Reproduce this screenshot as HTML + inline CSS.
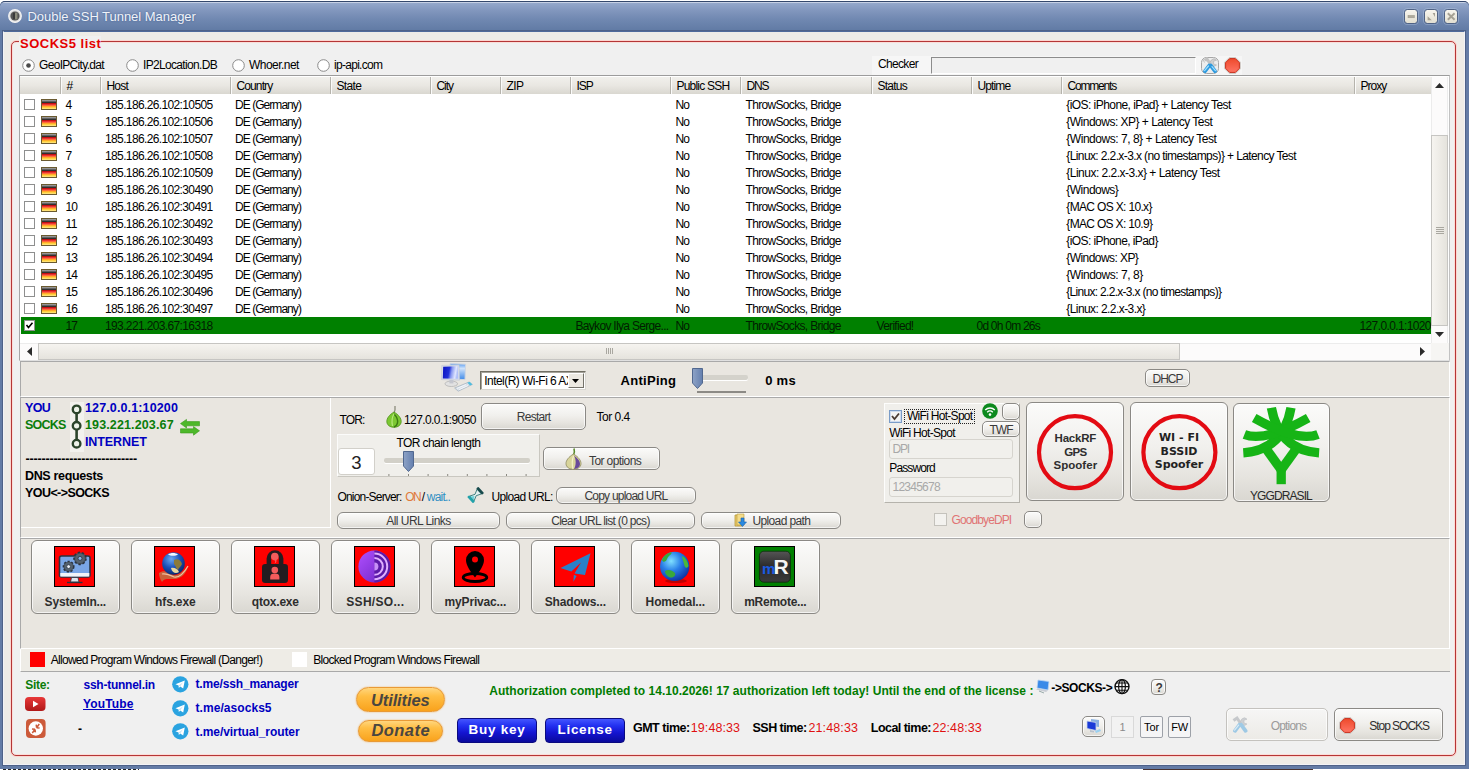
<!DOCTYPE html>
<html><head><meta charset="utf-8"><title>Double SSH Tunnel Manager</title>
<style>
html,body{margin:0;padding:0}
body{width:1470px;height:770px;overflow:hidden;background:#fff;font-family:"Liberation Sans",sans-serif;font-size:11px;color:#000;position:relative}
div,span,svg,a,b,i{position:absolute;box-sizing:border-box;white-space:nowrap}
svg{overflow:visible}
#win{left:0;top:0;width:1470px;height:770px}
#frame{left:0;top:1px;width:1469px;height:767.5px;background:#647ca6;border-radius:5px 5px 0 0}
#title{left:0;top:1px;width:1469px;height:30px;border-radius:5px 5px 0 0;border-top:1px solid #34486c;background:linear-gradient(#c6d0e4 0,#c6d0e4 1px,#93a7ca 1.5px,#8196bd 30%,#7088b1 60%,#607aa4 100%)}
#ttext{left:27.5px;top:8.5px;font-size:13px;line-height:16px;letter-spacing:-0.03px;color:#f0f3f9;text-shadow:0 0 2px #3d5a8c}
#client{left:3px;top:30.5px;width:1462px;height:734.5px;box-shadow:0 0 0 1px #4f6288;background:#eeece7;border:1px solid #f2f3f7;border-top-color:#4f6a9a}
#grp{left:11px;top:41px;width:1445px;height:715px;border:1px solid #b43636;border-radius:5px;background:#f0f0f0;box-shadow:0 0 0 1px rgba(255,205,200,0.75),inset 0 0 0 1px rgba(255,215,210,0.75)}
#legend{left:19px;top:36px;height:16px;line-height:16px;background:#f0f0f0;color:#e40000;font-weight:bold;font-size:13px;letter-spacing:0.5px;padding:0 0 0 1px}
.panel{background:#e9e6e0;border:1px solid #fff;border-top-color:#a9a9a9;border-left-color:#a9a9a9}
.t{line-height:13px;height:13px}
</style></head><body>
<div id="win">
<div id="frame"></div>
<div id="title"></div>
<span id="ttext">Double SSH Tunnel Manager</span>
<div id="client"></div>
<div id="grp"></div>
<span id="legend">SOCKS5 list</span>

<svg style="left:21.5px;top:58.8px" width="13" height="13"><circle cx="6.5" cy="6.5" r="5.8" fill="#fff" stroke="#8a8a8a" stroke-width="1"/><circle cx="6.5" cy="6.5" r="2.3" fill="#4a4a4a"/></svg>
<span style="left:39px;top:59px;font-size:12px;line-height:13px;height:13px;letter-spacing:-0.68px;">GeoIPCity.dat</span>
<svg style="left:125.5px;top:58.8px" width="13" height="13"><circle cx="6.5" cy="6.5" r="5.8" fill="#fff" stroke="#8a8a8a" stroke-width="1"/></svg>
<span style="left:143px;top:59px;font-size:12px;line-height:13px;height:13px;letter-spacing:-0.67px;">IP2Location.DB</span>
<svg style="left:231.5px;top:58.8px" width="13" height="13"><circle cx="6.5" cy="6.5" r="5.8" fill="#fff" stroke="#8a8a8a" stroke-width="1"/></svg>
<span style="left:249px;top:59px;font-size:12px;line-height:13px;height:13px;letter-spacing:-0.54px;">Whoer.net</span>
<svg style="left:316.5px;top:58.8px" width="13" height="13"><circle cx="6.5" cy="6.5" r="5.8" fill="#fff" stroke="#8a8a8a" stroke-width="1"/></svg>
<span style="left:334px;top:59px;font-size:12px;line-height:13px;height:13px;letter-spacing:-0.71px;">ip-api.com</span>
<div style="left:872px;top:56px;width:370px;height:19px;background:#f6f6f6"></div>
<span style="left:878px;top:58px;font-size:12px;line-height:13px;height:13px;letter-spacing:-0.67px;">Checker</span>
<div style="left:931px;top:57px;width:265px;height:17px;background:#f0f0f0;border:1px solid #fff;border-top-color:#8c8c8c;border-left-color:#8c8c8c"></div>
<div id="list" style="left:19px;top:75px;width:1431px;height:286px;background:#fff;border:1px solid #c2c2c2;border-top-color:#9c9c9c;border-left-color:#a6a6a6;border-bottom-color:#e0e0e0"></div>
<div id="hdr" style="left:20px;top:77px;width:1411px;height:17px;background:linear-gradient(#f1f0ec 0,#e9e7e2 50%,#d9d7d0 100%)"></div>
<div style="left:60px;top:77px;width:1px;height:17px;background:#b5b3ac"></div><div style="left:61px;top:77px;width:1px;height:17px;background:#fbfbfa"></div>
<span style="left:66.5px;top:80px;font-size:12px;line-height:13px;height:13px;letter-spacing:-0.67px;">#</span>
<div style="left:100px;top:77px;width:1px;height:17px;background:#b5b3ac"></div><div style="left:101px;top:77px;width:1px;height:17px;background:#fbfbfa"></div>
<span style="left:106.5px;top:80px;font-size:12px;line-height:13px;height:13px;letter-spacing:-0.82px;">Host</span>
<div style="left:230px;top:77px;width:1px;height:17px;background:#b5b3ac"></div><div style="left:231px;top:77px;width:1px;height:17px;background:#fbfbfa"></div>
<span style="left:236.5px;top:80px;font-size:12px;line-height:13px;height:13px;letter-spacing:-0.89px;">Country</span>
<div style="left:330px;top:77px;width:1px;height:17px;background:#b5b3ac"></div><div style="left:331px;top:77px;width:1px;height:17px;background:#fbfbfa"></div>
<span style="left:336.5px;top:80px;font-size:12px;line-height:13px;height:13px;letter-spacing:-0.66px;">State</span>
<div style="left:430px;top:77px;width:1px;height:17px;background:#b5b3ac"></div><div style="left:431px;top:77px;width:1px;height:17px;background:#fbfbfa"></div>
<span style="left:436.5px;top:80px;font-size:12px;line-height:13px;height:13px;letter-spacing:-1.09px;">City</span>
<div style="left:500px;top:77px;width:1px;height:17px;background:#b5b3ac"></div><div style="left:501px;top:77px;width:1px;height:17px;background:#fbfbfa"></div>
<span style="left:506.5px;top:80px;font-size:12px;line-height:13px;height:13px;letter-spacing:-0.56px;">ZIP</span>
<div style="left:570px;top:77px;width:1px;height:17px;background:#b5b3ac"></div><div style="left:571px;top:77px;width:1px;height:17px;background:#fbfbfa"></div>
<span style="left:576.5px;top:80px;font-size:12px;line-height:13px;height:13px;letter-spacing:-1.01px;">ISP</span>
<div style="left:670px;top:77px;width:1px;height:17px;background:#b5b3ac"></div><div style="left:671px;top:77px;width:1px;height:17px;background:#fbfbfa"></div>
<span style="left:676.5px;top:80px;font-size:12px;line-height:13px;height:13px;letter-spacing:-0.79px;">Public SSH</span>
<div style="left:740px;top:77px;width:1px;height:17px;background:#b5b3ac"></div><div style="left:741px;top:77px;width:1px;height:17px;background:#fbfbfa"></div>
<span style="left:746.5px;top:80px;font-size:12px;line-height:13px;height:13px;letter-spacing:-1.15px;">DNS</span>
<div style="left:871px;top:77px;width:1px;height:17px;background:#b5b3ac"></div><div style="left:872px;top:77px;width:1px;height:17px;background:#fbfbfa"></div>
<span style="left:877.5px;top:80px;font-size:12px;line-height:13px;height:13px;letter-spacing:-0.75px;">Status</span>
<div style="left:971px;top:77px;width:1px;height:17px;background:#b5b3ac"></div><div style="left:972px;top:77px;width:1px;height:17px;background:#fbfbfa"></div>
<span style="left:977.5px;top:80px;font-size:12px;line-height:13px;height:13px;letter-spacing:-0.87px;">Uptime</span>
<div style="left:1061px;top:77px;width:1px;height:17px;background:#b5b3ac"></div><div style="left:1062px;top:77px;width:1px;height:17px;background:#fbfbfa"></div>
<span style="left:1067.5px;top:80px;font-size:12px;line-height:13px;height:13px;letter-spacing:-1.19px;">Comments</span>
<div style="left:1354px;top:77px;width:1px;height:17px;background:#b5b3ac"></div><div style="left:1355px;top:77px;width:1px;height:17px;background:#fbfbfa"></div>
<span style="left:1360.5px;top:80px;font-size:12px;line-height:13px;height:13px;letter-spacing:-1.01px;">Proxy</span>
<svg style="left:0;top:0" width="0" height="0"><defs><linearGradient id="fg" x1="0" y1="0" x2="0" y2="1"><stop offset="0" stop-color="#c8c8c8"/><stop offset="0.14" stop-color="#808080"/><stop offset="0.32" stop-color="#262626"/><stop offset="0.4" stop-color="#c41010"/><stop offset="0.56" stop-color="#ff4a4a"/><stop offset="0.66" stop-color="#ff9a20"/><stop offset="0.8" stop-color="#ffd040"/><stop offset="1" stop-color="#fff0a0"/></linearGradient></defs></svg>
<div style="left:24px;top:99px;width:11px;height:11px;border:1px solid #8e8f8f;background:#fff"></div>
<svg style="left:41px;top:99px" width="16" height="11"><rect x="0.5" y="0.5" width="15" height="10" fill="url(#fg)" stroke="#6a5a30" stroke-width="1"/></svg>
<span style="left:65.5px;top:99px;font-size:12px;line-height:13px;height:13px;letter-spacing:-1.17px;">4</span>
<span style="left:105px;top:99px;font-size:12px;line-height:13px;height:13px;letter-spacing:-0.63px;">185.186.26.102:10505</span>
<span style="left:235px;top:99px;font-size:12px;line-height:13px;height:13px;letter-spacing:-0.95px;">DE (Germany)</span>
<span style="left:675.5px;top:99px;font-size:12px;line-height:13px;height:13px;letter-spacing:-1.02px;">No</span>
<span style="left:745.5px;top:99px;font-size:12px;line-height:13px;height:13px;letter-spacing:-0.67px;">ThrowSocks, Bridge</span>
<span style="left:1066.3px;top:99px;font-size:12px;line-height:13px;height:13px;letter-spacing:-0.56px;">{iOS: iPhone, iPad} + Latency Test</span>
<div style="left:24px;top:116px;width:11px;height:11px;border:1px solid #8e8f8f;background:#fff"></div>
<svg style="left:41px;top:116px" width="16" height="11"><rect x="0.5" y="0.5" width="15" height="10" fill="url(#fg)" stroke="#6a5a30" stroke-width="1"/></svg>
<span style="left:65.5px;top:116px;font-size:12px;line-height:13px;height:13px;letter-spacing:-1.17px;">5</span>
<span style="left:105px;top:116px;font-size:12px;line-height:13px;height:13px;letter-spacing:-0.63px;">185.186.26.102:10506</span>
<span style="left:235px;top:116px;font-size:12px;line-height:13px;height:13px;letter-spacing:-0.95px;">DE (Germany)</span>
<span style="left:675.5px;top:116px;font-size:12px;line-height:13px;height:13px;letter-spacing:-1.02px;">No</span>
<span style="left:745.5px;top:116px;font-size:12px;line-height:13px;height:13px;letter-spacing:-0.67px;">ThrowSocks, Bridge</span>
<span style="left:1066.3px;top:116px;font-size:12px;line-height:13px;height:13px;letter-spacing:-0.51px;">{Windows: XP} + Latency Test</span>
<div style="left:24px;top:133px;width:11px;height:11px;border:1px solid #8e8f8f;background:#fff"></div>
<svg style="left:41px;top:133px" width="16" height="11"><rect x="0.5" y="0.5" width="15" height="10" fill="url(#fg)" stroke="#6a5a30" stroke-width="1"/></svg>
<span style="left:65.5px;top:133px;font-size:12px;line-height:13px;height:13px;letter-spacing:-1.17px;">6</span>
<span style="left:105px;top:133px;font-size:12px;line-height:13px;height:13px;letter-spacing:-0.63px;">185.186.26.102:10507</span>
<span style="left:235px;top:133px;font-size:12px;line-height:13px;height:13px;letter-spacing:-0.95px;">DE (Germany)</span>
<span style="left:675.5px;top:133px;font-size:12px;line-height:13px;height:13px;letter-spacing:-1.02px;">No</span>
<span style="left:745.5px;top:133px;font-size:12px;line-height:13px;height:13px;letter-spacing:-0.67px;">ThrowSocks, Bridge</span>
<span style="left:1066.3px;top:133px;font-size:12px;line-height:13px;height:13px;letter-spacing:-0.47px;">{Windows: 7, 8} + Latency Test</span>
<div style="left:24px;top:150px;width:11px;height:11px;border:1px solid #8e8f8f;background:#fff"></div>
<svg style="left:41px;top:150px" width="16" height="11"><rect x="0.5" y="0.5" width="15" height="10" fill="url(#fg)" stroke="#6a5a30" stroke-width="1"/></svg>
<span style="left:65.5px;top:150px;font-size:12px;line-height:13px;height:13px;letter-spacing:-1.17px;">7</span>
<span style="left:105px;top:150px;font-size:12px;line-height:13px;height:13px;letter-spacing:-0.63px;">185.186.26.102:10508</span>
<span style="left:235px;top:150px;font-size:12px;line-height:13px;height:13px;letter-spacing:-0.95px;">DE (Germany)</span>
<span style="left:675.5px;top:150px;font-size:12px;line-height:13px;height:13px;letter-spacing:-1.02px;">No</span>
<span style="left:745.5px;top:150px;font-size:12px;line-height:13px;height:13px;letter-spacing:-0.67px;">ThrowSocks, Bridge</span>
<span style="left:1066.3px;top:150px;font-size:12px;line-height:13px;height:13px;letter-spacing:-0.61px;">{Linux: 2.2.x-3.x (no timestamps)} + Latency Test</span>
<div style="left:24px;top:167px;width:11px;height:11px;border:1px solid #8e8f8f;background:#fff"></div>
<svg style="left:41px;top:167px" width="16" height="11"><rect x="0.5" y="0.5" width="15" height="10" fill="url(#fg)" stroke="#6a5a30" stroke-width="1"/></svg>
<span style="left:65.5px;top:167px;font-size:12px;line-height:13px;height:13px;letter-spacing:-1.17px;">8</span>
<span style="left:105px;top:167px;font-size:12px;line-height:13px;height:13px;letter-spacing:-0.63px;">185.186.26.102:10509</span>
<span style="left:235px;top:167px;font-size:12px;line-height:13px;height:13px;letter-spacing:-0.95px;">DE (Germany)</span>
<span style="left:675.5px;top:167px;font-size:12px;line-height:13px;height:13px;letter-spacing:-1.02px;">No</span>
<span style="left:745.5px;top:167px;font-size:12px;line-height:13px;height:13px;letter-spacing:-0.67px;">ThrowSocks, Bridge</span>
<span style="left:1066.3px;top:167px;font-size:12px;line-height:13px;height:13px;letter-spacing:-0.51px;">{Linux: 2.2.x-3.x} + Latency Test</span>
<div style="left:24px;top:184px;width:11px;height:11px;border:1px solid #8e8f8f;background:#fff"></div>
<svg style="left:41px;top:184px" width="16" height="11"><rect x="0.5" y="0.5" width="15" height="10" fill="url(#fg)" stroke="#6a5a30" stroke-width="1"/></svg>
<span style="left:65.5px;top:184px;font-size:12px;line-height:13px;height:13px;letter-spacing:-1.17px;">9</span>
<span style="left:105px;top:184px;font-size:12px;line-height:13px;height:13px;letter-spacing:-0.63px;">185.186.26.102:30490</span>
<span style="left:235px;top:184px;font-size:12px;line-height:13px;height:13px;letter-spacing:-0.95px;">DE (Germany)</span>
<span style="left:675.5px;top:184px;font-size:12px;line-height:13px;height:13px;letter-spacing:-1.02px;">No</span>
<span style="left:745.5px;top:184px;font-size:12px;line-height:13px;height:13px;letter-spacing:-0.67px;">ThrowSocks, Bridge</span>
<span style="left:1066.3px;top:184px;font-size:12px;line-height:13px;height:13px;letter-spacing:-0.52px;">{Windows}</span>
<div style="left:24px;top:201px;width:11px;height:11px;border:1px solid #8e8f8f;background:#fff"></div>
<svg style="left:41px;top:201px" width="16" height="11"><rect x="0.5" y="0.5" width="15" height="10" fill="url(#fg)" stroke="#6a5a30" stroke-width="1"/></svg>
<span style="left:65.5px;top:201px;font-size:12px;line-height:13px;height:13px;letter-spacing:-0.92px;">10</span>
<span style="left:105px;top:201px;font-size:12px;line-height:13px;height:13px;letter-spacing:-0.63px;">185.186.26.102:30491</span>
<span style="left:235px;top:201px;font-size:12px;line-height:13px;height:13px;letter-spacing:-0.95px;">DE (Germany)</span>
<span style="left:675.5px;top:201px;font-size:12px;line-height:13px;height:13px;letter-spacing:-1.02px;">No</span>
<span style="left:745.5px;top:201px;font-size:12px;line-height:13px;height:13px;letter-spacing:-0.67px;">ThrowSocks, Bridge</span>
<span style="left:1066.3px;top:201px;font-size:12px;line-height:13px;height:13px;letter-spacing:-0.66px;">{MAC OS X: 10.x}</span>
<div style="left:24px;top:218px;width:11px;height:11px;border:1px solid #8e8f8f;background:#fff"></div>
<svg style="left:41px;top:218px" width="16" height="11"><rect x="0.5" y="0.5" width="15" height="10" fill="url(#fg)" stroke="#6a5a30" stroke-width="1"/></svg>
<span style="left:65.5px;top:218px;font-size:12px;line-height:13px;height:13px;letter-spacing:-0.48px;">11</span>
<span style="left:105px;top:218px;font-size:12px;line-height:13px;height:13px;letter-spacing:-0.63px;">185.186.26.102:30492</span>
<span style="left:235px;top:218px;font-size:12px;line-height:13px;height:13px;letter-spacing:-0.95px;">DE (Germany)</span>
<span style="left:675.5px;top:218px;font-size:12px;line-height:13px;height:13px;letter-spacing:-1.02px;">No</span>
<span style="left:745.5px;top:218px;font-size:12px;line-height:13px;height:13px;letter-spacing:-0.67px;">ThrowSocks, Bridge</span>
<span style="left:1066.3px;top:218px;font-size:12px;line-height:13px;height:13px;letter-spacing:-0.67px;">{MAC OS X: 10.9}</span>
<div style="left:24px;top:235px;width:11px;height:11px;border:1px solid #8e8f8f;background:#fff"></div>
<svg style="left:41px;top:235px" width="16" height="11"><rect x="0.5" y="0.5" width="15" height="10" fill="url(#fg)" stroke="#6a5a30" stroke-width="1"/></svg>
<span style="left:65.5px;top:235px;font-size:12px;line-height:13px;height:13px;letter-spacing:-0.92px;">12</span>
<span style="left:105px;top:235px;font-size:12px;line-height:13px;height:13px;letter-spacing:-0.63px;">185.186.26.102:30493</span>
<span style="left:235px;top:235px;font-size:12px;line-height:13px;height:13px;letter-spacing:-0.95px;">DE (Germany)</span>
<span style="left:675.5px;top:235px;font-size:12px;line-height:13px;height:13px;letter-spacing:-1.02px;">No</span>
<span style="left:745.5px;top:235px;font-size:12px;line-height:13px;height:13px;letter-spacing:-0.67px;">ThrowSocks, Bridge</span>
<span style="left:1066.3px;top:235px;font-size:12px;line-height:13px;height:13px;letter-spacing:-0.59px;">{iOS: iPhone, iPad}</span>
<div style="left:24px;top:252px;width:11px;height:11px;border:1px solid #8e8f8f;background:#fff"></div>
<svg style="left:41px;top:252px" width="16" height="11"><rect x="0.5" y="0.5" width="15" height="10" fill="url(#fg)" stroke="#6a5a30" stroke-width="1"/></svg>
<span style="left:65.5px;top:252px;font-size:12px;line-height:13px;height:13px;letter-spacing:-0.92px;">13</span>
<span style="left:105px;top:252px;font-size:12px;line-height:13px;height:13px;letter-spacing:-0.63px;">185.186.26.102:30494</span>
<span style="left:235px;top:252px;font-size:12px;line-height:13px;height:13px;letter-spacing:-0.95px;">DE (Germany)</span>
<span style="left:675.5px;top:252px;font-size:12px;line-height:13px;height:13px;letter-spacing:-1.02px;">No</span>
<span style="left:745.5px;top:252px;font-size:12px;line-height:13px;height:13px;letter-spacing:-0.67px;">ThrowSocks, Bridge</span>
<span style="left:1066.3px;top:252px;font-size:12px;line-height:13px;height:13px;letter-spacing:-0.57px;">{Windows: XP}</span>
<div style="left:24px;top:269px;width:11px;height:11px;border:1px solid #8e8f8f;background:#fff"></div>
<svg style="left:41px;top:269px" width="16" height="11"><rect x="0.5" y="0.5" width="15" height="10" fill="url(#fg)" stroke="#6a5a30" stroke-width="1"/></svg>
<span style="left:65.5px;top:269px;font-size:12px;line-height:13px;height:13px;letter-spacing:-0.92px;">14</span>
<span style="left:105px;top:269px;font-size:12px;line-height:13px;height:13px;letter-spacing:-0.63px;">185.186.26.102:30495</span>
<span style="left:235px;top:269px;font-size:12px;line-height:13px;height:13px;letter-spacing:-0.95px;">DE (Germany)</span>
<span style="left:675.5px;top:269px;font-size:12px;line-height:13px;height:13px;letter-spacing:-1.02px;">No</span>
<span style="left:745.5px;top:269px;font-size:12px;line-height:13px;height:13px;letter-spacing:-0.67px;">ThrowSocks, Bridge</span>
<span style="left:1066.3px;top:269px;font-size:12px;line-height:13px;height:13px;letter-spacing:-0.46px;">{Windows: 7, 8}</span>
<div style="left:24px;top:286px;width:11px;height:11px;border:1px solid #8e8f8f;background:#fff"></div>
<svg style="left:41px;top:286px" width="16" height="11"><rect x="0.5" y="0.5" width="15" height="10" fill="url(#fg)" stroke="#6a5a30" stroke-width="1"/></svg>
<span style="left:65.5px;top:286px;font-size:12px;line-height:13px;height:13px;letter-spacing:-0.92px;">15</span>
<span style="left:105px;top:286px;font-size:12px;line-height:13px;height:13px;letter-spacing:-0.63px;">185.186.26.102:30496</span>
<span style="left:235px;top:286px;font-size:12px;line-height:13px;height:13px;letter-spacing:-0.95px;">DE (Germany)</span>
<span style="left:675.5px;top:286px;font-size:12px;line-height:13px;height:13px;letter-spacing:-1.02px;">No</span>
<span style="left:745.5px;top:286px;font-size:12px;line-height:13px;height:13px;letter-spacing:-0.67px;">ThrowSocks, Bridge</span>
<span style="left:1066.3px;top:286px;font-size:12px;line-height:13px;height:13px;letter-spacing:-0.70px;">{Linux: 2.2.x-3.x (no timestamps)}</span>
<div style="left:24px;top:303px;width:11px;height:11px;border:1px solid #8e8f8f;background:#fff"></div>
<svg style="left:41px;top:303px" width="16" height="11"><rect x="0.5" y="0.5" width="15" height="10" fill="url(#fg)" stroke="#6a5a30" stroke-width="1"/></svg>
<span style="left:65.5px;top:303px;font-size:12px;line-height:13px;height:13px;letter-spacing:-0.92px;">16</span>
<span style="left:105px;top:303px;font-size:12px;line-height:13px;height:13px;letter-spacing:-0.63px;">185.186.26.102:30497</span>
<span style="left:235px;top:303px;font-size:12px;line-height:13px;height:13px;letter-spacing:-0.95px;">DE (Germany)</span>
<span style="left:675.5px;top:303px;font-size:12px;line-height:13px;height:13px;letter-spacing:-1.02px;">No</span>
<span style="left:745.5px;top:303px;font-size:12px;line-height:13px;height:13px;letter-spacing:-0.67px;">ThrowSocks, Bridge</span>
<span style="left:1066.3px;top:303px;font-size:12px;line-height:13px;height:13px;letter-spacing:-0.58px;">{Linux: 2.2.x-3.x}</span>
<div style="left:21px;top:317px;width:1410px;height:17px;background:#008000"></div>
<div style="left:24px;top:320px;width:11px;height:11px;border:1px solid #8e8f8f;background:#fff"></div>
<svg style="left:24px;top:320px" width="11" height="11"><path d="M2.5 5 L4.5 7.5 L8.5 2.8" fill="none" stroke="#000" stroke-width="1.6"/></svg>
<span style="left:65.5px;top:320px;font-size:12px;color:#001c00;line-height:13px;height:13px;letter-spacing:-0.92px;">17</span>
<span style="left:105px;top:320px;font-size:12px;color:#001c00;line-height:13px;height:13px;letter-spacing:-0.63px;">193.221.203.67:16318</span>
<span style="left:575.5px;top:320px;font-size:12px;color:#001c00;line-height:13px;height:13px;letter-spacing:-0.69px;">Baykov Ilya Serge...</span>
<span style="left:675.5px;top:320px;font-size:12px;color:#001c00;line-height:13px;height:13px;letter-spacing:-1.02px;">No</span>
<span style="left:745.5px;top:320px;font-size:12px;color:#001c00;line-height:13px;height:13px;letter-spacing:-0.67px;">ThrowSocks, Bridge</span>
<span style="left:876.5px;top:320px;font-size:12px;color:#001c00;line-height:13px;height:13px;letter-spacing:-0.71px;">Verified!</span>
<span style="left:976.5px;top:320px;font-size:12px;color:#001c00;line-height:13px;height:13px;letter-spacing:-0.77px;">0d 0h 0m 26s</span>
<div style="left:1355px;top:317px;width:76px;height:17px;overflow:hidden">
<span style="left:4.5px;top:3px;font-size:12px;color:#001c00;line-height:13px;height:13px;letter-spacing:-0.62px;">127.0.0.1:10200</span>
</div>
<div style="left:1431px;top:77px;width:17px;height:266px;background:#fcfbfb;border-left:1px solid #ececec;border-right:1px solid #ececec"></div>
<svg style="left:1431px;top:77px" width="17" height="17"><path d="M4 11 L8.5 6 L13 11 Z" fill="#2b2b2b"/></svg>
<div style="left:1431px;top:135px;width:17px;height:191px;background:linear-gradient(90deg,#f6f4f0,#e5e3dd);border:1px solid #c6c5c2"></div>
<svg style="left:1434.5px;top:226px" width="10" height="9"><path d="M1 1.5H9M1 3.5H9M1 5.5H9M1 7.5H9" stroke="#a9a7a0" stroke-width="1"/></svg>
<svg style="left:1431px;top:326px" width="17" height="17"><path d="M4 6 L13 6 L8.5 11 Z" fill="#2b2b2b"/></svg>
<div style="left:20px;top:343px;width:1411px;height:17px;background:#fcfbfb;border-top:1px solid #ececec"></div>
<svg style="left:21px;top:343px" width="17" height="17"><path d="M11 4 L11 13 L6 8.5 Z" fill="#2b2b2b"/></svg>
<div style="left:38px;top:343px;width:1142px;height:17px;background:linear-gradient(#f6f4f0,#e5e3dd);border:1px solid #c6c5c2"></div>
<svg style="left:605px;top:347px" width="10" height="9"><path d="M1.5 1V7M3.5 1V7M5.5 1V7M7.5 1V7" stroke="#a9a7a0" stroke-width="1"/></svg>
<svg style="left:1414px;top:343px" width="17" height="17"><path d="M6 4 L6 13 L11 8.5 Z" fill="#2b2b2b"/></svg>
<div style="left:1431px;top:343px;width:18px;height:17px;background:#f6f5f3"></div>
<div class="panel" style="left:20px;top:361px;width:1430px;height:36px"></div>
<svg style="left:441px;top:363px" width="32" height="30" viewBox="0 0 32 30"><defs><linearGradient id="mon" x1="0" y1="0" x2="1" y2="0.15"><stop offset="0" stop-color="#0a12c0"/><stop offset="0.45" stop-color="#2030d8"/><stop offset="0.62" stop-color="#8898f0"/><stop offset="0.88" stop-color="#e0e6ff"/><stop offset="1" stop-color="#b0c0f8"/></linearGradient><linearGradient id="mon2" x1="0" y1="0" x2="0" y2="1"><stop offset="0" stop-color="#5a9cf0"/><stop offset="0.3" stop-color="#cfe2fa"/><stop offset="1" stop-color="#3f8ae8"/></linearGradient></defs><path d="M9 0.6 L24.6 1.2 L24 16.6 L9 16Z" fill="url(#mon2)" stroke="#cfd6e2" stroke-width="1"/><ellipse cx="10.3" cy="20.8" rx="6.3" ry="2.7" fill="#e2e2e2" stroke="#b4b4b4" stroke-width="0.8"/><path d="M8.4 16.5 H12.4 V20.4 H8.4Z" fill="#c4c6ce"/><path d="M0.8 2.4 L18 1.9 L18.6 17.2 L0.4 16.6Z" fill="#d9dde8" stroke="#bfc6d4" stroke-width="0.6"/><path d="M2.2 3.7 L16.8 3.3 L17.3 15.8 L1.8 15.4Z" fill="url(#mon)"/><path d="M13.6 25 L28 19 L31.4 21.4 L17.2 28.2Z" fill="#d9e0e8" stroke="#a9b6c2" stroke-width="0.8"/><path d="M26.4 19.8 L28.6 18.8 L31.4 21.4 L29 22.6Z" fill="#4fbfe0"/><path d="M16 25.4 L25 21.6 M18 26.6 L27 22.6" stroke="#f6f8fa" stroke-width="0.9"/></svg>
<div style="left:480px;top:371px;width:106px;height:19px;background:#fff;border:1px solid #716f64;border-right-color:#d8d6d0;border-bottom-color:#d8d6d0;box-shadow:inset 1px 1px 0 #a5a39b"></div>
<div style="left:484px;top:374px;width:84px;height:14px;overflow:hidden">
<span style="left:0.3px;top:1px;font-size:12px;line-height:13px;height:13px;letter-spacing:-0.55px;">Intel(R) Wi-Fi 6 AX201</span>
</div>
<div style="left:568px;top:373px;width:16px;height:15px;background:#ece9e2;border:1px solid #fff;border-right-color:#74726a;border-bottom-color:#74726a"></div>
<svg style="left:568px;top:373px" width="16" height="15"><path d="M4 6 L11 6 L7.5 10 Z" fill="#000"/></svg>
<span style="left:620.5px;top:373px;font-size:13px;font-weight:bold;line-height:16px;height:16px;letter-spacing:0.30px;">AntiPing</span>
<div style="left:700px;top:375px;width:48px;height:5px;background:#d4d2cb;border-radius:2px;box-shadow:0 1px 0 #fff"></div>
<svg style="left:692px;top:368px" width="11" height="21"><defs><linearGradient id="th" x1="0" y1="0" x2="1" y2="0"><stop offset="0" stop-color="#8ea3c6"/><stop offset="1" stop-color="#647fae"/></linearGradient></defs><path d="M0.5 0.5 H10.5 V15 L5.5 20.5 L0.5 15 Z" fill="url(#th)" stroke="#51688f" stroke-width="1"/></svg>
<div style="left:697px;top:391px;width:49px;height:2px;background:#8c8a85"></div>
<span style="left:765.2px;top:373px;font-size:13px;font-weight:bold;line-height:16px;height:16px;letter-spacing:0.29px;">0 ms</span>
<div style="left:1145px;top:369px;width:45px;height:18px;border:1px solid #8b8985;background:linear-gradient(#fbfbfa 0,#f1f0ed 45%,#e6e4df 75%,#d9d7d1 100%);box-shadow:inset 0 0 0 1px rgba(255,255,255,0.7);border-radius:5px;"></div>
<span style="left:1152.5px;top:371.5px;font-size:12px;color:#3a3a3a;line-height:14px;height:14px;letter-spacing:-1.00px;">DHCP</span>
<div class="panel" style="left:20px;top:397px;width:1430px;height:141px"></div>
<div style="left:21px;top:527px;width:310px;height:1px;background:#fff"></div><div style="left:330px;top:398px;width:1px;height:130px;background:#fff"></div>
<span style="left:25px;top:401px;font-size:12.5px;font-weight:bold;color:#0000c0;line-height:15px;height:15px;letter-spacing:-0.63px;">YOU</span>
<span style="left:25px;top:418px;font-size:12.5px;font-weight:bold;color:#0a7d0a;line-height:15px;height:15px;letter-spacing:-0.77px;">SOCKS</span>
<span style="left:85px;top:401px;font-size:12.5px;font-weight:bold;color:#0000c0;line-height:15px;height:15px;letter-spacing:0.13px;">127.0.0.1:10200</span>
<span style="left:85px;top:418px;font-size:12.5px;font-weight:bold;color:#0a7d0a;line-height:15px;height:15px;letter-spacing:0.13px;">193.221.203.67</span>
<span style="left:85px;top:435px;font-size:12.5px;font-weight:bold;color:#0000c0;line-height:15px;height:15px;letter-spacing:-0.10px;">INTERNET</span>
<span style="left:25.5px;top:452px;font-size:12.5px;font-weight:bold;line-height:15px;height:15px;letter-spacing:-0.18px;">----------------------------</span>
<span style="left:25px;top:469px;font-size:12.5px;font-weight:bold;line-height:15px;height:15px;letter-spacing:-0.34px;">DNS requests</span>
<span style="left:25px;top:486px;font-size:12.5px;font-weight:bold;line-height:15px;height:15px;letter-spacing:-0.57px;">YOU&lt;-&gt;SOCKS</span>
<div style="left:70px;top:402px;width:14px;height:50px;background:#f3f2ee"></div>
<svg style="left:70px;top:402px" width="14" height="50"><path d="M6.6 9V41" stroke="#2c452c" stroke-width="2.6"/><circle cx="6.6" cy="7.4" r="3.8" fill="#eef3ea" stroke="#2c452c" stroke-width="2.4"/><circle cx="6.6" cy="23.8" r="3.8" fill="#eef3ea" stroke="#2c452c" stroke-width="2.4"/><circle cx="6.6" cy="41.7" r="3.8" fill="#eef3ea" stroke="#2c452c" stroke-width="2.4"/></svg>
<svg style="left:179.5px;top:419px" width="20" height="17"><path d="M0.5 4.6 L6.5 0.4 V2.6 H19.5 V6.8 H6.5 V9 Z" fill="#4db82a" stroke="#3a9a1c" stroke-width="0.6"/><path d="M19.5 11.8 L13.5 7.6 V9.8 H0.5 V14 H13.5 V16.2 Z" fill="#4db82a" stroke="#3a9a1c" stroke-width="0.6"/></svg>
<span style="left:339.5px;top:414px;font-size:12px;line-height:13px;height:13px;letter-spacing:-0.84px;">TOR:</span>
<svg style="left:386px;top:405px" width="16" height="23"><path d="M9 1 Q9.5 5 8 8" stroke="#8a8a7a" stroke-width="1.3" fill="none"/><path d="M8 7 C3 10 0.8 13.5 0.8 16.5 C0.8 20 4 22.3 8 22.3 C12 22.3 15.2 20 15.2 16.5 C15.2 13.5 13 10 8 7Z" fill="#7cc832" stroke="#4f8f1a" stroke-width="0.8"/><path d="M8 9 C11 12 12 15 11.5 18 C11 20.5 9.5 21.5 8 22" fill="none" stroke="#3c7a12" stroke-width="1.4"/><path d="M8 9 C6 12 5.5 16 6.5 21" fill="none" stroke="#b6e87a" stroke-width="1.2"/></svg>
<span style="left:404px;top:414px;font-size:12px;line-height:13px;height:13px;letter-spacing:-0.59px;">127.0.0.1:9050</span>
<div style="left:481px;top:403px;width:105px;height:27px;border:1px solid #8b8985;background:linear-gradient(#fbfbfa 0,#f1f0ed 45%,#e6e4df 75%,#d9d7d1 100%);box-shadow:inset 0 0 0 1px rgba(255,255,255,0.7);border-radius:5px;"></div>
<span style="left:516.8px;top:411.0px;font-size:12px;color:#3a3a3a;line-height:13px;height:13px;letter-spacing:-0.75px;">Restart</span>
<span style="left:596.5px;top:411px;font-size:12px;line-height:13px;height:13px;letter-spacing:-0.50px;">Tor 0.4</span>
<div style="left:337px;top:434px;width:203px;height:43px;background:#f0efeb;border:1px solid #fbfbfa;border-right-color:#c9c7c0;border-bottom-color:#c9c7c0"></div>
<span style="left:396.5px;top:437px;font-size:12px;line-height:13px;height:13px;letter-spacing:-0.59px;">TOR chain length</span>
<div style="left:338px;top:448px;width:37px;height:27px;background:#fff;border:1px solid #d2d0ca;border-radius:3px"></div>
<span style="left:351.3px;top:452px;font-size:18.5px;color:#222;line-height:21px;height:21px;">3</span>
<div style="left:384px;top:458px;width:146px;height:5px;background:#d2d0c8;border-radius:2px;box-shadow:0 1px 0 #fff"></div>
<svg style="left:403px;top:451px" width="11" height="21"><path d="M0.5 0.5 H10.5 V15 L5.5 20.5 L0.5 15 Z" fill="url(#th)" stroke="#51688f" stroke-width="1"/></svg>
<svg style="left:384px;top:474px" width="150" height="3"><rect x="4.4" y="0" width="1" height="2" fill="#8a8880"/><rect x="24.0" y="0" width="1" height="2" fill="#8a8880"/><rect x="43.6" y="0" width="1" height="2" fill="#8a8880"/><rect x="63.2" y="0" width="1" height="2" fill="#8a8880"/><rect x="82.8" y="0" width="1" height="2" fill="#8a8880"/><rect x="102.4" y="0" width="1" height="2" fill="#8a8880"/><rect x="122.0" y="0" width="1" height="2" fill="#8a8880"/><rect x="141.6" y="0" width="1" height="2" fill="#8a8880"/></svg>
<div style="left:543px;top:447px;width:117px;height:23px;border:1px solid #8b8985;background:linear-gradient(#fbfbfa 0,#f1f0ed 45%,#e6e4df 75%,#d9d7d1 100%);box-shadow:inset 0 0 0 1px rgba(255,255,255,0.7);border-radius:5px;"></div>
<svg style="left:565px;top:448px" width="17" height="22"><path d="M9 0.5 Q10 4 8.5 7" stroke="#5a8a2a" stroke-width="1.6" fill="none"/><path d="M8.5 6 C3.5 9 1 12.5 1 15.5 C1 19 4.2 21.3 8.5 21.3 C12.8 21.3 16 19 16 15.5 C16 12.5 13.5 9 8.5 6Z" fill="#d8d49a" stroke="#8a865a" stroke-width="0.8"/><path d="M9 7.5 C13 10.5 15 13 15 15.8 C15 19 12.5 20.8 9 21 C11 18 11.5 12 9 7.5Z" fill="#6a4a9a"/><path d="M8.5 8 C7 12 7 17 8 21" fill="none" stroke="#f4f0c8" stroke-width="1.2"/></svg>
<span style="left:589px;top:455px;font-size:12px;color:#3a3a3a;line-height:13px;height:13px;letter-spacing:-0.60px;">Tor options</span>
<span style="left:337.5px;top:491px;font-size:12px;line-height:13px;height:13px;letter-spacing:-0.82px;">Onion-Server:</span>
<span style="left:405.3px;top:491px;font-size:12px;color:#e07a3a;line-height:13px;height:13px;letter-spacing:-1.70px;">ON</span>
<span style="left:421.8px;top:491px;font-size:12px;line-height:13px;height:13px;letter-spacing:0.27px;">/</span>
<span style="left:426.8px;top:491px;font-size:12px;color:#2f8fc4;line-height:13px;height:13px;letter-spacing:-0.78px;">wait..</span>
<svg style="left:466px;top:486px" width="20" height="18"><g transform="translate(9.6,9) rotate(47)"><path d="M-3.2 -5 H3.2 L0.9 0 L3.2 5 H-3.2 L-0.9 0Z" fill="#e4f0f0" stroke="#3a7c7c" stroke-width="0.9"/><rect x="-4.3" y="-7.6" width="8.6" height="2.8" rx="0.8" fill="#174a4c"/><rect x="-4.3" y="4.8" width="8.6" height="2.8" rx="0.8" fill="#22a2aa"/><path d="M-2.2 4.6 L0 1.5 L2.2 4.6Z" fill="#6ad4dc"/></g></svg>
<span style="left:491.5px;top:491px;font-size:12px;line-height:13px;height:13px;letter-spacing:-0.68px;">Upload URL:</span>
<div style="left:556px;top:486.5px;width:140px;height:17.5px;border:1px solid #8b8985;background:linear-gradient(#fbfbfa 0,#f1f0ed 45%,#e6e4df 75%,#d9d7d1 100%);box-shadow:inset 0 0 0 1px rgba(255,255,255,0.7);border-radius:6px;"></div>
<span style="left:584.45px;top:490.25px;font-size:12px;color:#3a3a3a;line-height:13px;height:13px;letter-spacing:-0.78px;">Copy upload URL</span>
<div style="left:337px;top:511.5px;width:163px;height:17.5px;border:1px solid #8b8985;background:linear-gradient(#fbfbfa 0,#f1f0ed 45%,#e6e4df 75%,#d9d7d1 100%);box-shadow:inset 0 0 0 1px rgba(255,255,255,0.7);border-radius:6px;"></div>
<span style="left:386.3px;top:515.25px;font-size:12px;color:#3a3a3a;line-height:13px;height:13px;letter-spacing:-0.55px;">All URL Links</span>
<div style="left:506px;top:511.5px;width:189px;height:17.5px;border:1px solid #8b8985;background:linear-gradient(#fbfbfa 0,#f1f0ed 45%,#e6e4df 75%,#d9d7d1 100%);box-shadow:inset 0 0 0 1px rgba(255,255,255,0.7);border-radius:6px;"></div>
<span style="left:551.15px;top:515.25px;font-size:12px;color:#3a3a3a;line-height:13px;height:13px;letter-spacing:-0.68px;">Clear URL list (0 pcs)</span>
<div style="left:701px;top:511.5px;width:140px;height:17.5px;border:1px solid #8b8985;background:linear-gradient(#fbfbfa 0,#f1f0ed 45%,#e6e4df 75%,#d9d7d1 100%);box-shadow:inset 0 0 0 1px rgba(255,255,255,0.7);border-radius:6px;"></div>
<svg style="left:734px;top:513px" width="13" height="14"><path d="M1 2 H7 L8 3 V13 H1 Z" fill="#e8c86a" stroke="#b89a3a" stroke-width="0.8"/><path d="M3 1 H10 V12 H3Z" fill="#f4dc8a" stroke="#b89a3a" stroke-width="0.6"/><path d="M7 5 H10 V9 H12.5 L8.5 13.5 L4.5 9 H7 Z" fill="#2a8ae0" stroke="#1560b0" stroke-width="0.6"/></svg>
<span style="left:752.5px;top:515px;font-size:12px;color:#3a3a3a;line-height:13px;height:13px;letter-spacing:-0.64px;">Upload path</span>
<div style="left:884px;top:403px;width:136px;height:100px;background:#f0efeb;border:1px solid #fdfdfc;border-right-color:#b5b3ac;border-bottom-color:#b5b3ac"></div>
<div style="left:889px;top:410px;width:13px;height:13px;background:#f4f4f4;border:1px solid #7a9cc8;box-shadow:inset 0 0 0 1px #cfdcef"></div>
<svg style="left:889px;top:410px" width="13" height="13"><path d="M3 6 L5.5 9 L10 3.5" fill="none" stroke="#4a3c34" stroke-width="1.8"/></svg>
<div style="left:904px;top:409px;width:71px;height:15px;border:1px dotted #222"></div>
<span style="left:907px;top:410px;font-size:12px;line-height:13px;height:13px;letter-spacing:-0.71px;">WiFi Hot-Spot</span>
<span style="left:889.3px;top:427px;font-size:12px;line-height:13px;height:13px;letter-spacing:-0.70px;">WiFi Hot-Spot</span>
<svg style="left:982px;top:403px" width="16" height="16"><circle cx="8" cy="8" r="7.8" fill="#0d8a1e"/><path d="M3.2 7 A6.8 6.8 0 0 1 12.8 7" fill="none" stroke="#fff" stroke-width="1.4"/><path d="M5.2 9.2 A4 4 0 0 1 10.8 9.2" fill="none" stroke="#fff" stroke-width="1.4"/><circle cx="8" cy="11.6" r="1.3" fill="#fff"/></svg>
<div style="left:1002px;top:403px;width:18px;height:17px;border:1px solid #8b8985;background:linear-gradient(#fbfbfa 0,#f1f0ed 45%,#e6e4df 75%,#d9d7d1 100%);box-shadow:inset 0 0 0 1px rgba(255,255,255,0.7);border-radius:5px;"></div>
<div style="left:982px;top:421px;width:38px;height:16px;border:1px solid #8b8985;background:linear-gradient(#fbfbfa 0,#f1f0ed 45%,#e6e4df 75%,#d9d7d1 100%);box-shadow:inset 0 0 0 1px rgba(255,255,255,0.7);border-radius:5px;"></div>
<span style="left:989.4px;top:424.0px;font-size:12px;color:#3a3a3a;line-height:13px;height:13px;letter-spacing:-0.93px;">TWF</span>
<div style="left:889px;top:439px;width:124px;height:20px;background:#f1f0ec;border:1px solid #d6d4ce;border-radius:3px"></div>
<span style="left:892.5px;top:443px;font-size:12px;color:#a8a8a8;line-height:13px;height:13px;letter-spacing:-1.20px;">DPI</span>
<span style="left:889.3px;top:462px;font-size:12px;line-height:13px;height:13px;letter-spacing:-0.89px;">Password</span>
<div style="left:889px;top:477px;width:124px;height:20px;background:#f1f0ec;border:1px solid #d6d4ce;border-radius:3px"></div>
<span style="left:892.5px;top:481px;font-size:12px;color:#a8a8a8;line-height:13px;height:13px;letter-spacing:-0.76px;">12345678</span>
<div style="left:934px;top:513px;width:13px;height:13px;background:#f3f2ef;border:1px solid #c4c2bc"></div>
<span style="left:951.5px;top:514px;font-size:12px;color:#e07474;line-height:13px;height:13px;letter-spacing:-0.90px;">GoodbyeDPI</span>
<div style="left:1024px;top:511px;width:18px;height:17px;border:1px solid #8b8985;background:linear-gradient(#fbfbfa 0,#f1f0ed 45%,#e6e4df 75%,#d9d7d1 100%);box-shadow:inset 0 0 0 1px rgba(255,255,255,0.7);border-radius:5px;"></div>
<div style="left:1026px;top:402px;width:98px;height:99px;border:1px solid #8b8985;background:linear-gradient(#fbfbfa 0,#f1f0ed 45%,#e6e4df 75%,#d9d7d1 100%);box-shadow:inset 0 0 0 1px rgba(255,255,255,0.7);border-radius:6px;"></div>
<svg style="left:1026px;top:402px" width="98" height="99"><circle cx="49" cy="50.2" r="36" fill="none" stroke="#e30b13" stroke-width="4.2"/></svg>
<span style="left:1054.55px;top:431.0px;font-size:11.5px;font-weight:bold;color:#2e2e2e;line-height:14px;height:14px;letter-spacing:-0.22px;">HackRF</span>
<span style="left:1064.2px;top:444.6px;font-size:11.5px;font-weight:bold;color:#2e2e2e;line-height:14px;height:14px;letter-spacing:-0.70px;">GPS</span>
<span style="left:1053.45px;top:458.2px;font-size:11.5px;font-weight:bold;color:#2e2e2e;line-height:14px;height:14px;letter-spacing:0.04px;">Spoofer</span>
<div style="left:1130px;top:402px;width:98px;height:99px;border:1px solid #8b8985;background:linear-gradient(#fbfbfa 0,#f1f0ed 45%,#e6e4df 75%,#d9d7d1 100%);box-shadow:inset 0 0 0 1px rgba(255,255,255,0.7);border-radius:6px;"></div>
<svg style="left:1130px;top:402px" width="98" height="99"><circle cx="49.4" cy="50.2" r="36" fill="none" stroke="#e30b13" stroke-width="4.2"/></svg>
<span style="left:1130px;width:98px;top:431.0px;text-align:center;font-family:'DejaVu Sans',sans-serif;font-weight:bold;font-size:11px;line-height:14px;color:#222">WI - FI</span>
<span style="left:1130px;width:98px;top:444.6px;text-align:center;font-family:'DejaVu Sans',sans-serif;font-weight:bold;font-size:11px;line-height:14px;color:#222">BSSID</span>
<span style="left:1130px;width:98px;top:458.2px;text-align:center;font-family:'DejaVu Sans',sans-serif;font-weight:bold;font-size:11px;line-height:14px;color:#222">Spoofer</span>
<div style="left:1233px;top:403px;width:97px;height:99px;border:1px solid #8b8985;background:linear-gradient(#fbfbfa 0,#f1f0ed 45%,#e6e4df 75%,#d9d7d1 100%);box-shadow:inset 0 0 0 1px rgba(255,255,255,0.7);border-radius:6px;"></div>
<svg style="left:1233px;top:400px" width="100" height="100"><g fill="none" stroke="#16b416" stroke-width="9.3"><path d="M10.3 52.8 Q50.4 50.2 58 7.8"/><path d="M86.1 52.8 Q46 50.2 38.4 7.8"/><path d="M11.4 34.5 Q32 42.5 75.2 18"/><path d="M85 34.5 Q64.4 42.5 21.2 18"/><path d="M48.2 84.2 V66"/><path d="M48.2 69.8 L33.6 49.5"/><path d="M48.2 69.8 L62.8 49.5"/></g></svg>
<span style="left:1250px;top:490px;font-size:12px;color:#2a2a2a;line-height:13px;height:13px;letter-spacing:-0.91px;">YGGDRASIL</span>
<div class="panel" style="left:20px;top:538px;width:1430px;height:111px"></div>
<div style="left:30.5px;top:540px;width:89px;height:74px;border:1px solid #8b8985;background:linear-gradient(#fbfbfa 0,#f1f0ed 45%,#e6e4df 75%,#d9d7d1 100%);box-shadow:inset 0 0 0 1px rgba(255,255,255,0.7);border-radius:6px;"></div>
<svg style="left:54px;top:546px" width="41" height="41" viewBox="0 0 41 41"><rect x="0.5" y="0.5" width="40" height="40" fill="#ff0000" stroke="#000" stroke-width="1"/><rect x="5.5" y="10" width="30.5" height="21" rx="2" fill="#7aa6e6" stroke="#2a3340" stroke-width="1.6"/><rect x="6.3" y="27" width="29" height="3.6" fill="#f2f4f8"/><path d="M17.5 31.5 H24 L25 36 H16.5Z" fill="#dfe4ec" stroke="#2a3340" stroke-width="0.8"/><path d="M13 36.5H28.5" stroke="#2a3340" stroke-width="1.4"/><circle cx="26" cy="12.4" r="6" fill="#4a5560" stroke="#2a3340" stroke-width="1.6" stroke-dasharray="2.4 1.8"/><circle cx="26" cy="12.4" r="4.6" fill="#556270"/><circle cx="26" cy="12.4" r="2" fill="#8fb4ea" stroke="#2a3340" stroke-width="0.8"/><circle cx="14.6" cy="20.6" r="5.2" fill="#4a5560" stroke="#2a3340" stroke-width="1.5" stroke-dasharray="2.2 1.6"/><circle cx="14.6" cy="20.6" r="4" fill="#556270"/><circle cx="14.6" cy="20.6" r="1.9" fill="#e8eef8" stroke="#2a3340" stroke-width="0.7"/></svg>
<span style="left:44.55px;top:594.5px;font-size:12px;font-weight:bold;color:#2e2e2e;line-height:14px;height:14px;letter-spacing:-0.17px;">SystemIn...</span>
<div style="left:130.5px;top:540px;width:89px;height:74px;border:1px solid #8b8985;background:linear-gradient(#fbfbfa 0,#f1f0ed 45%,#e6e4df 75%,#d9d7d1 100%);box-shadow:inset 0 0 0 1px rgba(255,255,255,0.7);border-radius:6px;"></div>
<svg style="left:154px;top:546px" width="41" height="41" viewBox="0 0 41 41"><rect x="0.5" y="0.5" width="40" height="40" fill="#ff0000" stroke="#000" stroke-width="1"/><defs><radialGradient id="gl1" cx="0.4" cy="0.3" r="0.8"><stop offset="0" stop-color="#6aa8f0"/><stop offset="0.5" stop-color="#1a50b8"/><stop offset="1" stop-color="#06205a"/></radialGradient></defs><path d="M5 27 C9 24 13 25 17 28 C22 31 27 28 34 20 C33 26 28 33 20 33 C14 33 10 32 8 36 C6 33 5 30 5 27Z" fill="#c8623a"/><path d="M8 28 C12 27 16 29 20 31 C25 32 30 27 34 20" fill="none" stroke="#f0c0a0" stroke-width="1.2"/><circle cx="19.5" cy="17.5" r="11.3" fill="url(#gl1)"/><path d="M14 8.5 C17 6.5 21 6.5 24 8.5 C22 10 17 10.5 14 8.5Z" fill="#f4f8ff"/><path d="M20 14 C23 12 27 14 28 18 C27 21 25 21 24 24 C22 23 22 20 20 18Z" fill="#8a7a3a"/><path d="M17 22 C20 21 24 23 25 26 C22 28 18 27 17 22Z" fill="#e8d8a0"/></svg>
<span style="left:155.10000000000002px;top:594.5px;font-size:12px;font-weight:bold;color:#2e2e2e;line-height:14px;height:14px;letter-spacing:-0.14px;">hfs.exe</span>
<div style="left:230.5px;top:540px;width:89px;height:74px;border:1px solid #8b8985;background:linear-gradient(#fbfbfa 0,#f1f0ed 45%,#e6e4df 75%,#d9d7d1 100%);box-shadow:inset 0 0 0 1px rgba(255,255,255,0.7);border-radius:6px;"></div>
<svg style="left:254px;top:546px" width="41" height="41" viewBox="0 0 41 41"><rect x="0.5" y="0.5" width="40" height="40" fill="#ff0000" stroke="#000" stroke-width="1"/><path d="M14.9 19 V12.6 A6.1 6.1 0 0 1 27.1 12.6 V19" fill="none" stroke="#241c20" stroke-width="4.6"/><rect x="8" y="18" width="26" height="19" rx="3.2" fill="#241c20"/><circle cx="20.8" cy="10.6" r="3.8" fill="#f25c5c"/><path d="M22 13 C23 15 22.5 16.5 20.5 17.5 C21.5 16 21.3 14.8 20.8 14Z" fill="#f25c5c"/><circle cx="20.8" cy="24" r="3.3" fill="#f25c5c"/><path d="M16.2 33.5 V31 A4.6 3.4 0 0 1 25.4 31 V33.5 Z" fill="#f25c5c"/></svg>
<span style="left:251.85000000000002px;top:594.5px;font-size:12px;font-weight:bold;color:#2e2e2e;line-height:14px;height:14px;letter-spacing:-0.22px;">qtox.exe</span>
<div style="left:330.5px;top:540px;width:89px;height:74px;border:1px solid #8b8985;background:linear-gradient(#fbfbfa 0,#f1f0ed 45%,#e6e4df 75%,#d9d7d1 100%);box-shadow:inset 0 0 0 1px rgba(255,255,255,0.7);border-radius:6px;"></div>
<svg style="left:354px;top:546px" width="41" height="41" viewBox="0 0 41 41"><rect x="0.5" y="0.5" width="40" height="40" fill="#ff0000" stroke="#000" stroke-width="1"/><defs><linearGradient id="tb" x1="0" y1="0" x2="1" y2="1"><stop offset="0" stop-color="#b050ff"/><stop offset="1" stop-color="#6a22c0"/></linearGradient></defs><circle cx="20.4" cy="20.4" r="16" fill="url(#tb)"/><path d="M20.4 4.4 A16 16 0 0 1 20.4 36.4 Z" fill="#5c1aa8"/><path d="M20.4 7.6 A12.8 12.8 0 0 1 20.4 33.2" fill="none" stroke="#e0b0ff" stroke-width="2"/><path d="M20.4 12 A8.4 8.4 0 0 1 20.4 28.8" fill="none" stroke="#e0b0ff" stroke-width="2"/><path d="M20.4 16.4 A4 4 0 0 1 20.4 24.4 Z" fill="#c890f8"/></svg>
<span style="left:346.3px;top:594.5px;font-size:12px;font-weight:bold;color:#2e2e2e;line-height:14px;height:14px;letter-spacing:0.29px;">SSH/SO...</span>
<div style="left:430.5px;top:540px;width:89px;height:74px;border:1px solid #8b8985;background:linear-gradient(#fbfbfa 0,#f1f0ed 45%,#e6e4df 75%,#d9d7d1 100%);box-shadow:inset 0 0 0 1px rgba(255,255,255,0.7);border-radius:6px;"></div>
<svg style="left:454px;top:546px" width="41" height="41" viewBox="0 0 41 41"><rect x="0.5" y="0.5" width="40" height="40" fill="#ff0000" stroke="#000" stroke-width="1"/><ellipse cx="21" cy="31.5" rx="11.8" ry="4" fill="none" stroke="#000" stroke-width="2.8"/><path d="M21 31.5 C16 25 12 19 12 14 A9 9 0 0 1 30 14 C30 19 26 25 21 31.5Z" fill="#000"/><circle cx="21" cy="13.6" r="3" fill="#ff0000"/></svg>
<span style="left:444.55px;top:594.5px;font-size:12px;font-weight:bold;color:#2e2e2e;line-height:14px;height:14px;letter-spacing:-0.17px;">myPrivac...</span>
<div style="left:530.5px;top:540px;width:89px;height:74px;border:1px solid #8b8985;background:linear-gradient(#fbfbfa 0,#f1f0ed 45%,#e6e4df 75%,#d9d7d1 100%);box-shadow:inset 0 0 0 1px rgba(255,255,255,0.7);border-radius:6px;"></div>
<svg style="left:554px;top:546px" width="41" height="41" viewBox="0 0 41 41"><rect x="0.5" y="0.5" width="40" height="40" fill="#ff0000" stroke="#000" stroke-width="1"/><path d="M36.5 7.3 L6.5 22 L17.4 25.4 L27 16.5 L20.5 27.5 L31 29 Z" fill="#2a80c8"/><path d="M19.8 28.8 L22.6 30 L19.4 35.8Z" fill="#2a80c8"/></svg>
<span style="left:544.75px;top:594.5px;font-size:12px;font-weight:bold;color:#2e2e2e;line-height:14px;height:14px;letter-spacing:-0.16px;">Shadows...</span>
<div style="left:630.5px;top:540px;width:89px;height:74px;border:1px solid #8b8985;background:linear-gradient(#fbfbfa 0,#f1f0ed 45%,#e6e4df 75%,#d9d7d1 100%);box-shadow:inset 0 0 0 1px rgba(255,255,255,0.7);border-radius:6px;"></div>
<svg style="left:654px;top:546px" width="41" height="41" viewBox="0 0 41 41"><rect x="0.5" y="0.5" width="40" height="40" fill="#ff0000" stroke="#000" stroke-width="1"/><defs><radialGradient id="gl2" cx="0.38" cy="0.32" r="0.75"><stop offset="0" stop-color="#7fe0ff"/><stop offset="0.45" stop-color="#2a7fe8"/><stop offset="1" stop-color="#0a2a9a"/></radialGradient></defs><ellipse cx="22" cy="35" rx="11" ry="2" fill="#c00000"/><circle cx="20.7" cy="20.4" r="14.7" fill="url(#gl2)"/><path d="M8 14 C10 9 14 6.5 18 6.5 C17 9 14 10 13 13 C12 16 9 17 8 14Z" fill="#3aa83a"/><path d="M28 10 C31 11 34 15 34.5 20 C33 23 30.5 22 30 18 C29.5 15 28 13 28 10Z" fill="#4ab83a"/><path d="M11 25 C14 23 18 24 21 27 C22 30 19 32 16 31.5 C13 30.5 11 28 11 25Z" fill="#3aa83a"/></svg>
<span style="left:645.5999999999999px;top:594.5px;font-size:12px;font-weight:bold;color:#2e2e2e;line-height:14px;height:14px;letter-spacing:-0.13px;">Homedal...</span>
<div style="left:730.5px;top:540px;width:89px;height:74px;border:1px solid #8b8985;background:linear-gradient(#fbfbfa 0,#f1f0ed 45%,#e6e4df 75%,#d9d7d1 100%);box-shadow:inset 0 0 0 1px rgba(255,255,255,0.7);border-radius:6px;"></div>
<svg style="left:754px;top:546px" width="41" height="41" viewBox="0 0 41 41"><rect x="0.5" y="0.5" width="40" height="40" fill="#008000" stroke="#000" stroke-width="1"/><defs><linearGradient id="mr" x1="0" y1="0" x2="0" y2="1"><stop offset="0" stop-color="#555"/><stop offset="0.5" stop-color="#2a2a2a"/><stop offset="1" stop-color="#3a3a3a"/></linearGradient></defs><rect x="5.4" y="5.2" width="31" height="31" rx="4.5" fill="url(#mr)" stroke="#0a2a0a" stroke-width="0.8"/><text x="8" y="28" font-family="Liberation Sans, sans-serif" font-weight="bold" font-size="15" fill="#1a5ae0">m</text><text x="19.5" y="28" font-family="Liberation Sans, sans-serif" font-weight="bold" font-size="21" fill="#f4f4f4">R</text></svg>
<span style="left:744.1999999999999px;top:594.5px;font-size:12px;font-weight:bold;color:#2e2e2e;line-height:14px;height:14px;letter-spacing:-0.25px;">mRemote...</span>
<div style="left:20px;top:649px;width:1430px;height:23px;background:#eeece6;border-left:1px solid #fff;border-bottom:1px solid #a9a9a9"></div>
<div style="left:30px;top:652px;width:15px;height:15px;background:#ff0000"></div>
<span style="left:50.8px;top:654px;font-size:12px;line-height:13px;height:13px;letter-spacing:-0.73px;">Allowed Program Windows Firewall (Danger!)</span>
<div style="left:292px;top:652px;width:15px;height:15px;background:#fff"></div>
<span style="left:313.2px;top:654px;font-size:12px;line-height:13px;height:13px;letter-spacing:-0.71px;">Blocked Program Windows Firewall</span>
<span style="left:25.3px;top:678px;font-size:12px;font-weight:bold;color:#0a7d0a;line-height:14px;height:14px;letter-spacing:-0.30px;">Site:</span>
<span style="left:83.5px;top:678px;font-size:12px;font-weight:bold;color:#0000c0;line-height:14px;height:14px;letter-spacing:-0.25px;">ssh-tunnel.in</span>
<span style="left:83px;top:696.5px;font-size:12px;font-weight:bold;color:#0000c0;line-height:14px;height:14px;letter-spacing:0.15px;text-decoration:underline;">YouTube</span>
<span style="left:78px;top:722px;font-size:12px;font-weight:bold;line-height:14px;height:14px;letter-spacing:-0.50px;">-</span>
<svg style="left:24.5px;top:697px" width="21" height="15"><defs><linearGradient id="yt" x1="0" y1="0" x2="0" y2="1"><stop offset="0" stop-color="#e83838"/><stop offset="1" stop-color="#b01818"/></linearGradient></defs><rect x="0" y="0" width="20.5" height="14" rx="4" fill="url(#yt)"/><path d="M8 3.8 L13.5 7 L8 10.2Z" fill="#fff"/></svg>
<svg style="left:25.5px;top:719px" width="20" height="20"><rect x="0" y="0" width="19.6" height="19" rx="4" fill="#cc5a3a"/><circle cx="9.8" cy="9.5" r="7.2" fill="#fff"/><path d="M13.3 5 L10.6 8.7 M9 10.3 L6.3 14 M10.6 8.7 L13.6 9.1 M10.6 8.7 L10.2 5.7 M9 10.3 L6 9.9 M9 10.3 L9.4 13.3" stroke="#cc5a3a" stroke-width="1.5" fill="none"/></svg>
<svg style="left:171.5px;top:675.7px" width="17" height="17"><circle cx="8.3" cy="8.3" r="8.15" fill="#2aa3e0"/><path d="M3.4 8.2 L12.8 4.4 L11.2 12.4 L8.2 10.4 L6.8 12 L6.6 9.6 Z" fill="#fff"/><path d="M6.6 9.6 L11 6.2 L8.2 10.4" fill="#c8e4f4"/></svg>
<div style="left:195px;top:677px;width:105px;height:16px;overflow:hidden">
<span style="left:0.5px;top:0px;font-size:12px;font-weight:bold;color:#0000c0;line-height:14px;height:14px;letter-spacing:-0.15px;">t.me/ssh_manager</span>
</div>
<svg style="left:171.5px;top:699.6px" width="17" height="17"><circle cx="8.3" cy="8.3" r="8.15" fill="#2aa3e0"/><path d="M3.4 8.2 L12.8 4.4 L11.2 12.4 L8.2 10.4 L6.8 12 L6.6 9.6 Z" fill="#fff"/><path d="M6.6 9.6 L11 6.2 L8.2 10.4" fill="#c8e4f4"/></svg>
<div style="left:195px;top:700.5px;width:105px;height:16px;overflow:hidden">
<span style="left:0.5px;top:0px;font-size:12px;font-weight:bold;color:#0000c0;line-height:14px;height:14px;letter-spacing:0.06px;">t.me/asocks5</span>
</div>
<svg style="left:171.5px;top:722.7px" width="17" height="17"><circle cx="8.3" cy="8.3" r="8.15" fill="#2aa3e0"/><path d="M3.4 8.2 L12.8 4.4 L11.2 12.4 L8.2 10.4 L6.8 12 L6.6 9.6 Z" fill="#fff"/><path d="M6.6 9.6 L11 6.2 L8.2 10.4" fill="#c8e4f4"/></svg>
<div style="left:195px;top:724.5px;width:105px;height:16px;overflow:hidden">
<span style="left:0.5px;top:0px;font-size:12px;font-weight:bold;color:#0000c0;line-height:14px;height:14px;letter-spacing:-0.07px;">t.me/virtual_router</span>
</div>
<div style="left:356px;top:687px;width:89px;height:25px;border-radius:12.5px;background:linear-gradient(#ffd67e 0,#ffbe44 35%,#f9a21c 100%);border:1px solid #e99a36;box-shadow:0 0 1.5px #f0a030"></div>
<span style="left:371px;top:690px;font-size:16.5px;font-weight:bold;font-style:italic;color:#4a4640;line-height:20px;height:20px;letter-spacing:-0.12px;">Utilities</span>
<div style="left:358px;top:719.5px;width:85px;height:22.5px;border-radius:12.5px;background:linear-gradient(#ffd67e 0,#ffbe44 35%,#f9a21c 100%);border:1px solid #e99a36;box-shadow:0 0 1.5px #f0a030"></div>
<span style="left:371.5px;top:719.5px;font-size:16.5px;font-weight:bold;font-style:italic;color:#4a4640;line-height:20px;height:20px;letter-spacing:0.43px;">Donate</span>
<div style="left:457px;top:718px;width:80px;height:25px;border-radius:4px;background:linear-gradient(#4456ff 0,#2230f0 30%,#1414d0 60%,#0a0a9c 100%);border:1px solid #0a0a80"></div>
<span style="left:468.5px;top:721.5px;font-size:13.5px;font-weight:bold;color:#fff;line-height:16px;height:16px;letter-spacing:0.75px;">Buy key</span>
<div style="left:545px;top:718px;width:80px;height:25px;border-radius:4px;background:linear-gradient(#4456ff 0,#2230f0 30%,#1414d0 60%,#0a0a9c 100%);border:1px solid #0a0a80"></div>
<span style="left:557.5px;top:721.5px;font-size:13.5px;font-weight:bold;color:#fff;line-height:16px;height:16px;letter-spacing:0.69px;">License</span>
<span style="left:489.3px;top:684px;font-size:12px;font-weight:bold;color:#007c00;line-height:14px;height:14px;letter-spacing:0.02px;">Authorization completed to 14.10.2026! 17 authorization left today! Until the end of the license</span>
<span style="left:1029.5px;top:684px;font-size:12px;font-weight:bold;color:#007c00;line-height:14px;height:14px;">:</span>
<svg style="left:1035px;top:679px" width="17" height="15"><path d="M3 1 L14 2.5 L13 11 L2 9 Z" fill="#3a8ae8" stroke="#bcd4f0" stroke-width="0.8"/><path d="M1 10.5 L11 13 L13 11.5 L3 9.5Z" fill="#c8ccd4"/><path d="M4 12 L9 14" stroke="#9aa" stroke-width="1"/></svg>
<span style="left:1051.3px;top:681px;font-size:12px;font-weight:bold;line-height:14px;height:14px;letter-spacing:-0.41px;">-&gt;SOCKS-&gt;</span>
<svg style="left:1114px;top:679px" width="16" height="16"><circle cx="8" cy="7.6" r="7" fill="#fff" stroke="#111" stroke-width="1.4"/><ellipse cx="8" cy="7.6" rx="3.4" ry="7" fill="none" stroke="#111" stroke-width="1.2"/><path d="M8 0.6V14.6M1 7.6H15M2 4H14M2 11.2H14" stroke="#111" stroke-width="1.1"/></svg>
<div style="left:1151px;top:678.5px;width:15px;height:16px;border:1px solid #8b8985;background:linear-gradient(#fbfbfa 0,#f1f0ed 45%,#e6e4df 75%,#d9d7d1 100%);box-shadow:inset 0 0 0 1px rgba(255,255,255,0.7);border-radius:4px;"></div>
<span style="left:1155.5px;top:681.5px;font-size:12px;font-weight:bold;color:#3a3a3a;line-height:13px;height:13px;letter-spacing:-1.33px;">?</span>
<span style="left:632.9px;top:720.5px;font-size:12.5px;font-weight:bold;line-height:15px;height:15px;letter-spacing:-0.47px;">GMT time:</span>
<span style="left:690.8px;top:720.5px;font-size:12.5px;color:#e01010;line-height:15px;height:15px;letter-spacing:0.08px;">19:48:33</span>
<span style="left:752.6px;top:720.5px;font-size:12.5px;font-weight:bold;line-height:15px;height:15px;letter-spacing:-0.56px;">SSH time:</span>
<span style="left:808.4px;top:720.5px;font-size:12.5px;color:#e01010;line-height:15px;height:15px;letter-spacing:0.13px;">21:48:33</span>
<span style="left:870.8px;top:720.5px;font-size:12.5px;font-weight:bold;line-height:15px;height:15px;letter-spacing:-0.53px;">Local time:</span>
<span style="left:932.5px;top:720.5px;font-size:12.5px;color:#e01010;line-height:15px;height:15px;letter-spacing:0.08px;">22:48:33</span>
<div style="left:1082px;top:716px;width:23px;height:21px;border:1px solid #8b8985;background:linear-gradient(#fbfbfa 0,#f1f0ed 45%,#e6e4df 75%,#d9d7d1 100%);box-shadow:inset 0 0 0 1px rgba(255,255,255,0.7);border-radius:5px;"></div>
<svg style="left:1085px;top:718px" width="17" height="16"><path d="M6 1 L14 2 L14 9 L6 8Z" fill="#8ab0e0"/><path d="M2 3 L11 4.5 L11 12.5 L2 10.5 Z" fill="#1a3ad8" stroke="#c8d4ec" stroke-width="0.8"/><path d="M5 12 L9 13 L9 14.5 L5 14Z" fill="#b8c0cc"/><path d="M10 13 L15 11 L16 13 L11 15Z" fill="#9ad0f0"/></svg>
<div style="left:1111px;top:716px;width:23px;height:22px;background:#f2f2f2;border:1px solid #d9d9d9;text-align:center"><span class="t" style="left:0;width:21px;top:4px;color:#8a8a8a;letter-spacing:-0.2px">1</span></div>
<div style="left:1140px;top:716px;width:23px;height:22px;background:#f5f5f6;border:1px solid #9da1a8;border-radius:2px;text-align:center"><span class="t" style="left:0;width:21px;top:4px;letter-spacing:-0.1px">Tor</span></div>
<div style="left:1168px;top:716px;width:23px;height:22px;background:#f5f5f6;border:1px solid #9da1a8;border-radius:2px;text-align:center"><span class="t" style="left:0;width:21px;top:4px;letter-spacing:-0.3px">FW</span></div>
<div style="left:1226px;top:708px;width:102px;height:33px;border:1px solid #8b8985;background:linear-gradient(#fbfbfa 0,#f1f0ed 45%,#e6e4df 75%,#d9d7d1 100%);box-shadow:inset 0 0 0 1px rgba(255,255,255,0.7);border-radius:5px;border-color:#c4c2be;background:linear-gradient(#f6f6f5,#eceae6)"></div>
<svg style="left:1231px;top:716px" width="19" height="18" opacity="0.5"><path d="M2.5 4.5 L6 2 L10 8" fill="none" stroke="#9aa0a8" stroke-width="3"/><path d="M16 3.2 A3.6 3.6 0 1 0 16 8 L13 7 L13 4.2Z" fill="#aab0b8" stroke="#8a9098" stroke-width="0.6"/><path d="M8.4 8.8 L4 14.8" stroke="#4fa6e0" stroke-width="3.8" stroke-linecap="round"/><path d="M10.2 8.8 L14.6 14.8" stroke="#4fa6e0" stroke-width="3.8" stroke-linecap="round"/><path d="M7.6 9.2 L3.6 14.2" stroke="#c4e8ff" stroke-width="1.2" stroke-linecap="round"/></svg>
<span style="left:1270.8px;top:719.5px;font-size:12px;color:#9a9a9a;line-height:13px;height:13px;letter-spacing:-0.84px;">Options</span>
<div style="left:1334px;top:708px;width:109px;height:33px;border:1px solid #8b8985;background:linear-gradient(#fbfbfa 0,#f1f0ed 45%,#e6e4df 75%,#d9d7d1 100%);box-shadow:inset 0 0 0 1px rgba(255,255,255,0.7);border-radius:5px;"></div>
<svg style="left:1339px;top:716.5px" width="17" height="17"><defs><linearGradient id="sg2" x1="0" y1="0" x2="0" y2="1"><stop offset="0" stop-color="#ee4a2c"/><stop offset="1" stop-color="#ff7464"/></linearGradient></defs><path d="M5.2 0.6 H11.8 L16.4 5.2 V11.8 L11.8 16.4 H5.2 L0.6 11.8 V5.2Z" fill="#f4ecea" stroke="#c4bcb8" stroke-width="0.8"/><path d="M5.6 1.6 H11.4 L15.4 5.6 V11.4 L11.4 15.4 H5.6 L1.6 11.4 V5.6Z" fill="url(#sg2)" stroke="#c8301c" stroke-width="1"/></svg>
<span style="left:1369.2px;top:719.5px;font-size:12px;color:#2e2e2e;line-height:13px;height:13px;letter-spacing:-1.02px;">Stop SOCKS</span>
<svg style="left:1201px;top:57px" width="18" height="17"><rect x="0.5" y="0.5" width="17" height="16" rx="5" fill="#ededed" stroke="#a6a6a6" stroke-width="1"/><path d="M2.5 4.5 L6 2 L10 8" fill="none" stroke="#c2c2c2" stroke-width="3"/><path d="M3 3.5 L6.5 6.5" stroke="#f6f6f6" stroke-width="1"/><path d="M15.5 3.2 A3.6 3.6 0 1 0 15.5 8 L12.6 7 L12.6 4.2Z" fill="#cfcfcf" stroke="#b0b0b0" stroke-width="0.6"/><path d="M8.2 8.6 L4 14.2" stroke="#2f9ade" stroke-width="3.8" stroke-linecap="round"/><path d="M9.8 8.6 L14 14.2" stroke="#2f9ade" stroke-width="3.8" stroke-linecap="round"/><path d="M7.4 9 L3.6 13.6" stroke="#9fe0ff" stroke-width="1.2" stroke-linecap="round"/><path d="M11 9.6 L14.4 13.6" stroke="#9fe0ff" stroke-width="1.2" stroke-linecap="round"/></svg>
<svg style="left:1223.5px;top:57px" width="17" height="17"><defs><linearGradient id="sg1" x1="0" y1="0" x2="0" y2="1"><stop offset="0" stop-color="#ee4a2c"/><stop offset="1" stop-color="#ff7464"/></linearGradient></defs><path d="M5.2 0.6 H11.8 L16.4 5.2 V11.8 L11.8 16.4 H5.2 L0.6 11.8 V5.2Z" fill="#f4ecea" stroke="#c4bcb8" stroke-width="0.8"/><path d="M5.6 1.6 H11.4 L15.4 5.6 V11.4 L11.4 15.4 H5.6 L1.6 11.4 V5.6Z" fill="url(#sg1)" stroke="#c8301c" stroke-width="1"/></svg>
<div style="left:1404px;top:9.3px;width:14.4px;height:15px;border-radius:3.5px;border:1px solid #4f6284;background:linear-gradient(#f7f5ee,#ebe8dc 60%,#e2dfd2);box-shadow:0 0 0 1px rgba(190,205,230,0.35)"></div>
<div style="left:1423.5px;top:9.3px;width:14.4px;height:15px;border-radius:3.5px;border:1px solid #4f6284;background:linear-gradient(#f7f5ee,#ebe8dc 60%,#e2dfd2);box-shadow:0 0 0 1px rgba(190,205,230,0.35)"></div>
<div style="left:1443.5px;top:9.3px;width:14.4px;height:15px;border-radius:3.5px;border:1px solid #4f6284;background:linear-gradient(#f7f5ee,#ebe8dc 60%,#e2dfd2);box-shadow:0 0 0 1px rgba(190,205,230,0.35)"></div>
<svg style="left:1404px;top:9.3px" width="15" height="15"><rect x="4" y="6.4" width="6.4" height="2.4" fill="#aeaa9c" stroke="#9a968a" stroke-width="0.5"/></svg>
<svg style="left:1423.5px;top:9.3px" width="15" height="15"><path d="M8.6 4 H11 V8 Z" fill="#a5a194"/><path d="M3.6 7.2 V11.2 H7.8Z" fill="#a5a194"/></svg>
<svg style="left:1443.5px;top:9.3px" width="15" height="15"><path d="M3.8 4.2 L10.6 10.8 M10.6 4.2 L3.8 10.8" stroke="#a5a194" stroke-width="1.9"/></svg>
<svg style="left:8px;top:9px" width="14" height="14"><circle cx="7" cy="7" r="6.3" fill="#dcdcdc" stroke="#f4f4f4" stroke-width="1.2"/><circle cx="7" cy="7" r="4.6" fill="#555"/><path d="M5 3.6 H9.4 V10.4 H5Z" fill="#8a8a7a"/><path d="M5 3.6 H7 V10.4 H5Z" fill="#3a3a3a"/></svg>
<div style="left:1143px;top:768.6px;width:170px;height:1.4px;background:#4a3430"></div>
<div style="left:3px;top:769px;width:136px;height:1px;background:repeating-linear-gradient(90deg,#222 0,#222 3px,#fff 3px,#fff 5px)"></div>
</div></body></html>
